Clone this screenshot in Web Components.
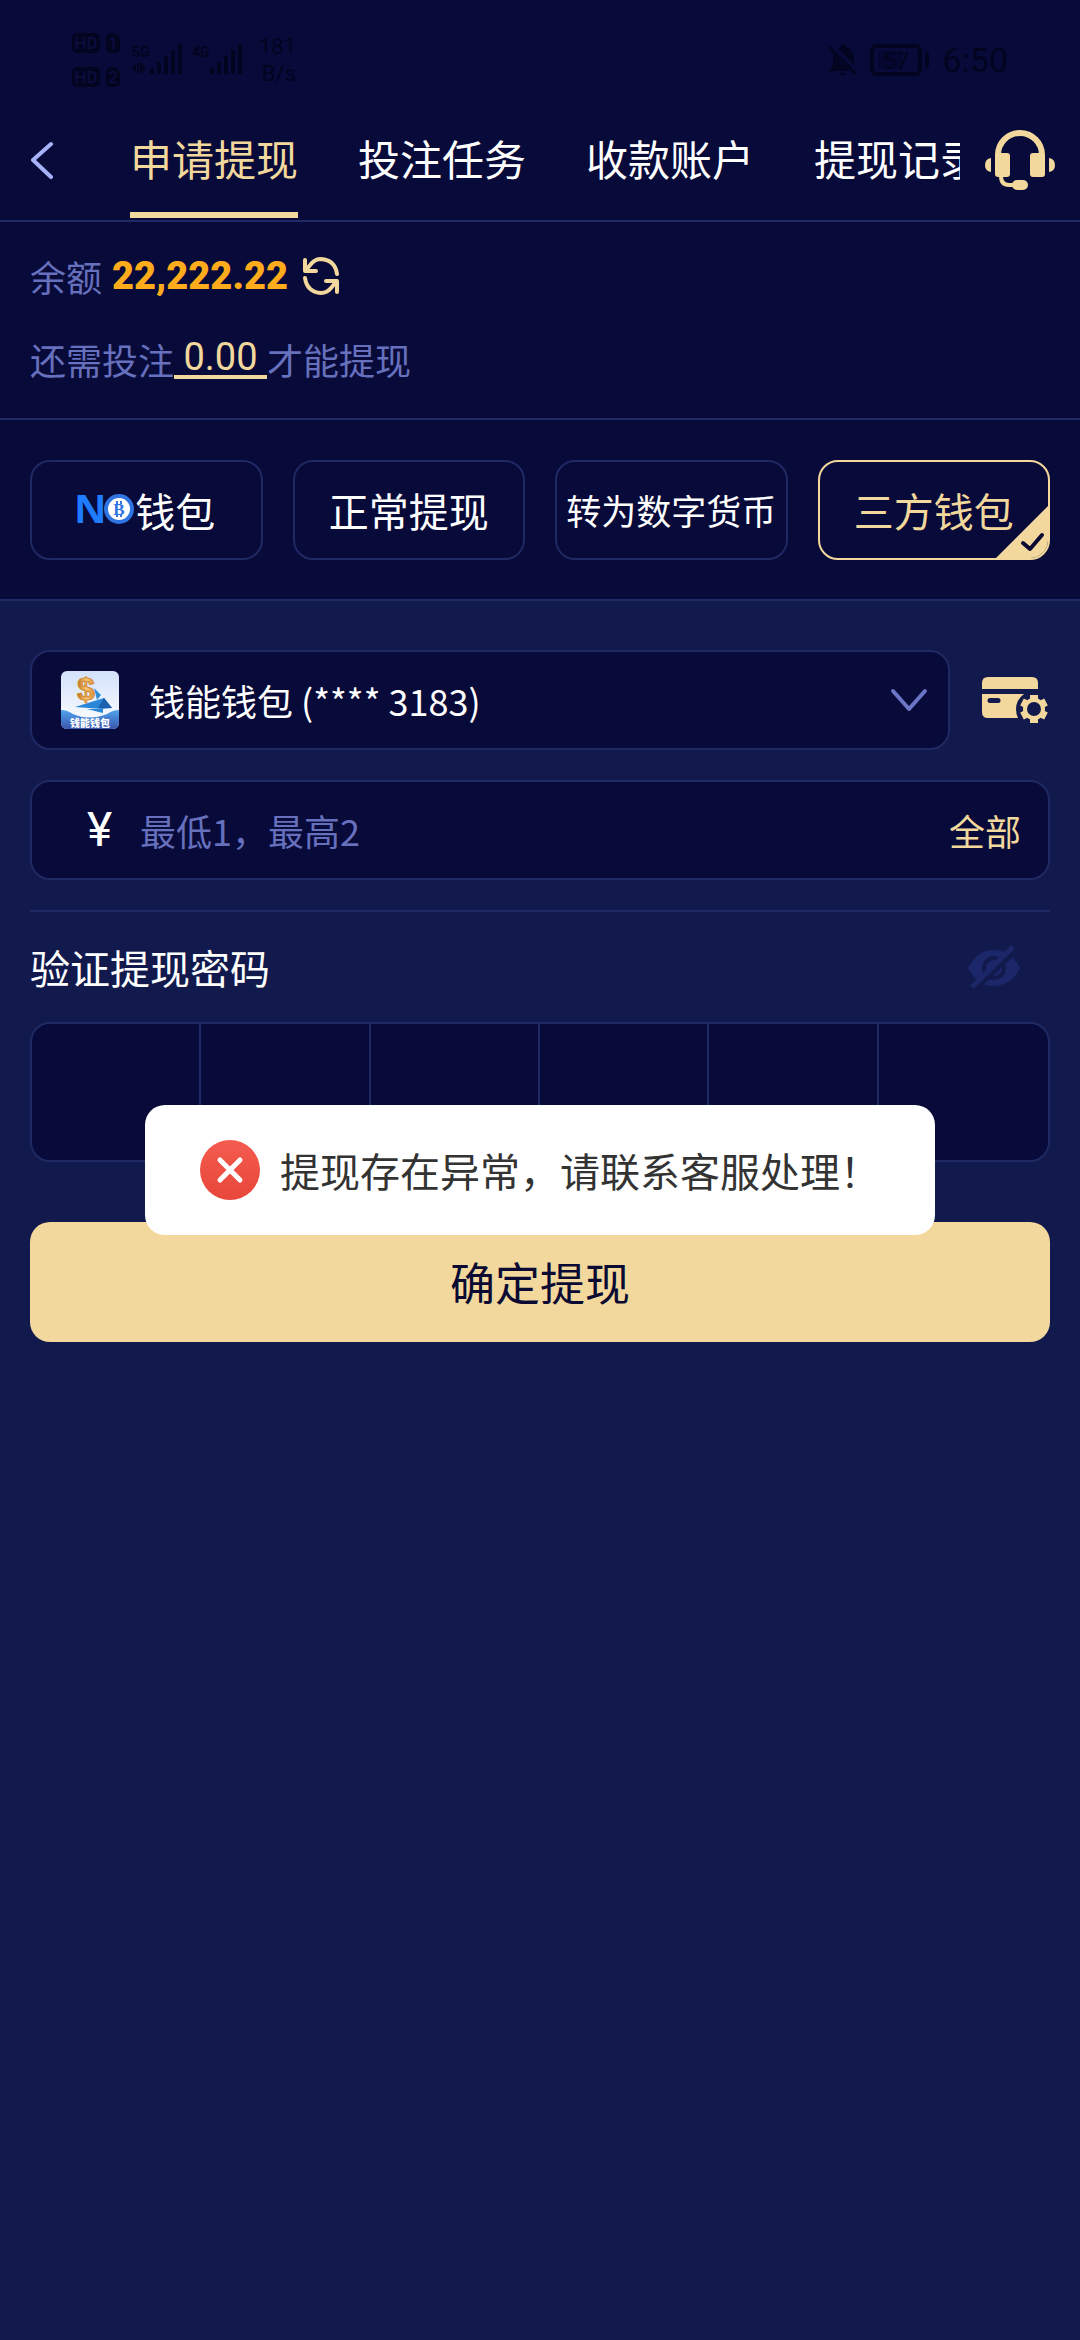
<!DOCTYPE html>
<html lang="zh-CN">
<head>
<meta charset="utf-8">
<meta name="viewport" content="width=device-width, initial-scale=1">
<title>申请提现</title>
<style>
  :root {
    --bg-dark: #080a39;
    --bg: #121a4d;
    --line: #1f2963;
    --gold: #f2d89c;
    --muted: #6670bd;
    --status: #03041f;
    --digits: Roboto, "Noto Sans CJK SC", sans-serif;
  }

  body {
    margin: 0;
    min-height: 100vh;
    background-color: var(--bg);
    color: white;
    font-family: "Noto Sans CJK SC", sans-serif;
    font-size: 36px;
    line-height: 54px;
  }
</style>
</head>
<body>
<withdraw-page></withdraw-page>
<app-toast>提现存在异常，请联系客服处理！</app-toast>

<script>
const baseStyle = `
  * { box-sizing: border-box; }
  :host { display: block; }
  svg { display: block; flex: none; }
  button, input, select {
    font: inherit;
    color: inherit;
    background: none;
    border: 0;
    margin: 0;
    padding: 0;
    outline: none;
  }
  button { cursor: pointer; }
`;

// small base class, every element below only has to give its template
class AppElement extends HTMLElement {
  constructor() {
    super();
    this.shadow = this.attachShadow({ mode: 'open' });
  }

  connectedCallback() {
    this.shadow.innerHTML = `<style>${baseStyle}</style>${this.template()}`;
    this.ready();
  }

  ready() {}
}

customElements.define(
  'status-bar',
  class StatusBar extends AppElement {
    template() {
      const sim = (n) => `
        <div class="sim">
          <span class="hd">HD</span>
          <span class="slot">${n}</span>
        </div>`;
      const bars = `
        <svg width="32" height="30" viewBox="0 0 32 30" fill="currentColor">
          <rect x="0" y="24" width="4" height="6" rx="1"/>
          <rect x="7" y="18" width="4" height="12" rx="1"/>
          <rect x="14" y="12" width="4" height="18" rx="1"/>
          <rect x="21" y="6" width="4" height="24" rx="1"/>
          <rect x="28" y="0" width="4" height="30" rx="1"/>
        </svg>`;
      return `
        <style>
          :host {
            display: flex;
            align-items: center;
            justify-content: space-between;
            height: 100px;
            padding: 20px 72px 0;
            color: var(--status);
            font-family: var(--digits);
          }
          .group { display: flex; align-items: center; }
          .sims { display: grid; gap: 14px; margin-right: 12px; }
          .sim { display: flex; gap: 6px; }
          .hd, .slot {
            background-color: var(--status);
            border-radius: 5px;
            height: 20px;
            width: 28px;
            color: #0b0d40;
            font-size: 17px;
            font-weight: 500;
            line-height: 20px;
            text-align: center;
          }
          .slot { width: 14px; border-top-right-radius: 8px; }
          .net {
            display: grid;
            width: 18px;
            font-size: 14px;
            font-weight: 700;
            line-height: 16px;
            height: 32px;
          }
          .signal { display: flex; margin-right: 10px; }
          .speed {
            font-size: 22px;
            line-height: 27px;
            text-align: right;
            width: 44px;
          }
          .right { gap: 12px; }
          .clock { font-size: 34px; line-height: 40px; }
        </style>
        <div class="group">
          <div class="sims">${sim(1)}${sim(2)}</div>
          <div class="signal">
            <div class="net">5G
              <svg width="14" height="12" viewBox="0 0 14 12" fill="currentColor">
                <path d="M0 6l4-5v10zM5 1h2v10H5zM8 1h2v10H8zM14 6l-4-4v8z"/>
              </svg>
            </div>
            ${bars}
          </div>
          <div class="signal"><div class="net">4G</div>${bars}</div>
          <div class="speed">181<br>B/s</div>
        </div>
        <div class="group right">
          <svg width="30" height="32" viewBox="0 0 30 32" fill="currentColor">
            <path d="M10 4q2-1 3-1 0-3 2.500-3T18 3q8 3 8 11v7z"/>
            <path d="M5 10l17 17H1l4-5z"/>
            <path d="M11 29h8q-4 5-8 0z"/>
            <path d="M1 3l27 27" stroke="currentColor" stroke-width="3"/>
          </svg>
          <svg width="60" height="32" viewBox="0 0 60 32">
            <rect x="2" y="2" width="48" height="28" rx="5" fill="none" stroke="currentColor" stroke-width="4"/>
            <rect x="8" y="7" width="24" height="18" fill="currentColor" opacity=".3"/>
            <rect x="55" y="8" width="4" height="16" rx="2" fill="currentColor"/>
            <text x="26" y="25" text-anchor="middle" font-size="24" fill="currentColor">57</text>
          </svg>
          <span class="clock">6:50</span>
        </div>
      `;
    }
  }
);

customElements.define(
  'page-header',
  class PageHeader extends AppElement {
    template() {
      return `
        <style>
          :host {
            display: flex;
            height: 122px;
            border-bottom: 2px solid var(--line);
          }
          button { display: flex; align-items: center; flex: none; }
          .back { width: 130px; padding-left: 30px; }
          .service { width: 120px; padding-left: 25px; }
          nav {
            display: flex;
            flex: 1;
            gap: 60px;
            min-width: 0;
            overflow: hidden;
          }
        </style>
        <button class="back" aria-label="返回">
          <svg width="24" height="38" viewBox="0 0 24 38" fill="none" stroke="#a7b2fa" stroke-width="4" stroke-linecap="round" stroke-linejoin="round">
            <path d="M21 3L3 19l18 17"/>
          </svg>
        </button>
        <nav><slot></slot></nav>
        <button class="service" aria-label="客服">
          <svg width="70" height="60" viewBox="0 0 70 60" fill="#f2d89c">
            <path d="M13 30v-5a22 22 0 0 1 44 0v5" fill="none" stroke="#f2d89c" stroke-width="6"/>
            <rect x="10" y="23" width="15" height="24" rx="3"/>
            <rect x="45" y="23" width="15" height="24" rx="3"/>
            <path d="M6 28v14q-6-1-6-7t6-7zM64 28v14q6-1 6-7t-6-7z"/>
            <path d="M16 46q0 9 8 9h6" fill="none" stroke="#f2d89c" stroke-width="4"/>
            <rect x="27" y="50" width="16" height="10" rx="5"/>
          </svg>
        </button>
      `;
    }
  }
);

customElements.define(
  'tab-link',
  class TabLink extends AppElement {
    template() {
      return `
        <style>
          :host { display: flex; flex: none; }
          a {
            display: block;
            height: 118px;
            padding-top: 31px;
            border-bottom: 6px solid transparent;
            color: white;
            font-size: 42px;
            text-decoration: none;
            white-space: nowrap;
          }
          :host([active]) a {
            color: var(--gold);
            border-bottom-color: var(--gold);
          }
        </style>
        <a href="#${this.getAttribute('target')}"><slot></slot></a>
      `;
    }
  }
);

customElements.define(
  'balance-info',
  class BalanceInfo extends AppElement {
    template() {
      return `
        <style>
          :host {
            display: grid;
            gap: 29px;
            padding: 27px 30px 32px;
            border-bottom: 2px solid var(--line);
            color: var(--muted);
          }
          div { display: flex; align-items: center; }
          .amount {
            margin: 0 15px 0 10px;
            color: #ffac1c;
            font-family: var(--digits);
            font-size: 38px;
            font-weight: 900;
          }
          .need {
            height: 40px;
            border-bottom: 4px solid var(--gold);
            color: var(--gold);
            font-family: var(--digits);
            font-size: 38px;
            line-height: 36px;
            white-space: pre;
          }
        </style>
        <div>
          <span>余额</span>
          <span class="amount">${this.getAttribute('balance')}</span>
          <button aria-label="刷新余额">
            <svg width="36" height="38" viewBox="0 0 36 38" fill="none" stroke="#f2d89c" stroke-width="4" stroke-linecap="round" stroke-linejoin="round">
              <path d="M2 3v11h11M3 13l5-6q4-5 10-5 14 1 16 15"/>
              <path d="M34 35V24H23M33 25l-5 6q-4 5-10 5Q4 35 2 21"/>
            </svg>
          </button>
        </div>
        <div>还需投注<span class="need"> ${this.getAttribute('need')} </span>才能提现</div>
      `;
    }
  }
);

customElements.define(
  'pay-option',
  class PayOption extends AppElement {
    template() {
      return `
        <style>
          :host { min-width: 0; }
          button {
            position: relative;
            display: flex;
            align-items: center;
            justify-content: center;
            width: 100%;
            height: 100px;
            border: 2px solid var(--line);
            border-radius: 20px;
            overflow: hidden;
            font-size: 40px;
            white-space: nowrap;
          }
          :host([small]) button { font-size: 35px; }
          :host([selected]) button {
            border-color: var(--gold);
            color: var(--gold);
          }
          .check { display: none; }
          :host([selected]) .check {
            display: block;
            position: absolute;
            right: 0;
            bottom: 0;
          }
        </style>
        <button>
          <slot name="logo"></slot>
          <slot></slot>
          <svg class="check" width="52" height="52" viewBox="0 0 52 52">
            <path d="M52 0v52H0z" fill="#f2d89c"/>
            <path d="M27 37l7 6 12-14" fill="none" stroke="#0a0a32" stroke-width="4" stroke-linecap="round" stroke-linejoin="round"/>
          </svg>
        </button>
      `;
    }
  }
);

customElements.define(
  'no-logo',
  class NoLogo extends AppElement {
    template() {
      return `
        <style>
          svg { overflow: visible; }
        </style>
        <svg width="58" height="30" viewBox="0 0 58 30">
          <text x="-3" y="28" font-family="Open Sans" font-weight="700" font-size="40" fill="#1f7bff">N</text>
          <circle cx="42" cy="14" r="15" fill="#2f74e0"/>
          <circle cx="42" cy="14" r="11" fill="white"/>
          <path d="M40 6v3M44 6v3M40 19v3M44 19v3" stroke="#2f74e0" stroke-width="2"/>
          <text x="42" y="20" text-anchor="middle" font-family="Liberation Serif" font-weight="700" font-size="17" fill="#2f74e0">B</text>
        </svg>
      `;
    }
  }
);

customElements.define(
  'wallet-select',
  class WalletSelect extends AppElement {
    template() {
      return `
        <style>
          :host { display: flex; }
          .box {
            display: flex;
            align-items: center;
            flex: 1;
            height: 100px;
            padding: 0 20px 0 29px;
            border: 2px solid var(--line);
            border-radius: 20px;
            background-color: var(--bg-dark);
          }
          select {
            flex: 1;
            min-width: 0;
            height: 96px;
            margin-left: 30px;
            appearance: none;
            cursor: pointer;
          }
          option { background-color: var(--bg-dark); }
          .arrow { pointer-events: none; }
          button { flex: none; width: 100px; padding-left: 32px; }
        </style>
        <div class="box">
          <svg width="58" height="58" viewBox="0 0 58 58">
            <defs>
              <linearGradient id="sky" x2="0" y2="1">
                <stop offset="0" stop-color="#d3e1fb"/>
                <stop offset="1" stop-color="#fff"/>
              </linearGradient>
              <linearGradient id="sea" x2="0" y2="1">
                <stop offset="0" stop-color="#4fa4ee"/>
                <stop offset="1" stop-color="#3b55ac"/>
              </linearGradient>
              <linearGradient id="coin">
                <stop offset="0" stop-color="#b56a1c"/>
                <stop offset=".5" stop-color="#fbc873"/>
                <stop offset="1" stop-color="#d98a2b"/>
              </linearGradient>
              <clipPath id="card"><rect width="58" height="58" rx="6"/></clipPath>
            </defs>
            <g clip-path="url(#card)">
              <rect width="58" height="58" fill="url(#sky)"/>
              <path d="M33 17l7 7-4 5z" fill="#2d8fd8"/>
              <path d="M14 36l29-9 8 10-10 1z" fill="#2a86d6"/>
              <path d="M43 27l8 10H37z" fill="#1b5fae"/>
              <path d="M26 38h16v4z" fill="#2a86d6"/>
              <text x="25" y="29" text-anchor="middle" font-family="Liberation Sans" font-weight="700" font-size="32" fill="url(#coin)" stroke="#d08a35" stroke-width="1">$</text>
              <path d="M0 39q6 0 12 4 16 7 34 0 6-4 12-4v19H0z" fill="url(#sea)"/>
              <text x="29" y="56" text-anchor="middle" font-weight="900" font-size="10" fill="white">钱能钱包</text>
            </g>
          </svg>
          <select aria-label="选择钱包">
            <option>${this.getAttribute('wallet')}</option>
          </select>
          <svg class="arrow" width="38" height="24" viewBox="0 0 38 24" fill="none" stroke="#6b76c6" stroke-width="4" stroke-linecap="round" stroke-linejoin="round">
            <path d="M3 3l16 18L35 3"/>
          </svg>
        </div>
        <button aria-label="管理钱包">
          <svg width="66" height="46" viewBox="0 0 66 46" fill="#f2d89c">
            <path d="M0 12V6q0-6 6-6h44q6 0 6 6v6z"/>
            <path d="M0 17h42q-8 6-8 15 0 5 2 9H6q-6 0-6-6zM8 21a2.500 2.500 0 0 0 0 5h8a2.500 2.500 0 0 0 0-5z" fill-rule="evenodd"/>
            <g stroke="#f2d89c" stroke-width="8">
              <path d="M52 18v5M52 41v5M40 25l4 2M60 37l4 2M64 25l-4 2M44 37l-4 2"/>
            </g>
            <circle cx="52" cy="32" r="9" fill="none" stroke="#f2d89c" stroke-width="4"/>
          </svg>
        </button>
      `;
    }
  }
);

customElements.define(
  'amount-field',
  class AmountField extends AppElement {
    template() {
      return `
        <style>
          :host {
            display: flex;
            align-items: center;
            height: 100px;
            padding: 0 27px 0 55px;
            border: 2px solid var(--line);
            border-radius: 20px;
            background-color: var(--bg-dark);
          }
          label { width: 53px; font-family: var(--digits); font-size: 48px; }
          input { flex: 1; min-width: 0; height: 96px; }
          input::placeholder { color: var(--muted); opacity: 1; }
          button { color: var(--gold); }
        </style>
        <label for="amount">¥</label>
        <input id="amount" inputmode="decimal" placeholder="${this.getAttribute('hint')}">
        <button>全部</button>
      `;
    }
  }
);

customElements.define(
  'pin-field',
  class PinField extends AppElement {
    template() {
      let cells = '';
      for (let i = 0; i < 6; i++) {
        cells += `<input type="password" inputmode="numeric" maxlength="1" id="pin${i}" aria-label="密码第${i + 1}位">`;
      }
      return `
        <style>
          .title {
            display: flex;
            align-items: center;
            justify-content: space-between;
            height: 112px;
            padding-right: 30px;
            border-top: 2px solid var(--line);
            font-size: 40px;
          }
          .cells {
            display: grid;
            grid-template-columns: repeat(6, 1fr);
            height: 140px;
            border: 2px solid var(--line);
            border-radius: 20px;
            background-color: var(--bg-dark);
            overflow: hidden;
          }
          input { width: 100%; min-width: 0; text-align: center; }
          input:not(:last-child) { border-right: 2px solid var(--line); }
        </style>
        <div class="title">
          <label for="pin0"><slot></slot></label>
          <button aria-label="显示密码">
            <svg width="52" height="46" viewBox="0 0 52 46">
              <path d="M0 24Q9 6 26 6t26 18Q43 42 26 42T0 24z" fill="#1b2768"/>
              <circle cx="26" cy="24" r="10" fill="none" stroke="#121a4d" stroke-width="4"/>
              <path d="M7 45L50 5" stroke="#121a4d" stroke-width="5"/>
              <path d="M4 43L45 3" stroke="#1b2768" stroke-width="5"/>
            </svg>
          </button>
        </div>
        <div class="cells">${cells}</div>
      `;
    }

    ready() {
      const inputs = [...this.shadow.querySelectorAll('input')];
      inputs.forEach((input, i) => {
        input.addEventListener('input', () => {
          if (input.value && inputs[i + 1]) inputs[i + 1].focus();
        });
      });
      this.shadow.querySelector('button').addEventListener('click', () => {
        inputs.forEach((input) => {
          input.type = input.type === 'password' ? 'text' : 'password';
        });
      });
    }
  }
);

customElements.define(
  'submit-button',
  class SubmitButton extends AppElement {
    template() {
      return `
        <style>
          button {
            width: 100%;
            height: 120px;
            border-radius: 20px;
            background-color: var(--gold);
            color: #0a0a32;
            font-size: 45px;
          }
        </style>
        <button><slot></slot></button>
      `;
    }
  }
);

customElements.define(
  'app-toast',
  class AppToast extends AppElement {
    template() {
      return `
        <style>
          :host {
            position: fixed;
            inset: 0;
            display: flex;
            align-items: center;
            justify-content: center;
            pointer-events: none;
          }
          #toast {
            display: flex;
            align-items: center;
            gap: 20px;
            padding: 35px 55px;
            border-radius: 20px;
            background-color: white;
            color: #333;
            font-size: 40px;
            line-height: 60px;
          }
        </style>
        <div id="toast" role="alert">
          <svg width="60" height="60" viewBox="0 0 60 60">
            <defs>
              <linearGradient id="red" x2="0" y2="1">
                <stop offset="0" stop-color="#f45c4f"/>
                <stop offset="1" stop-color="#e8463a"/>
              </linearGradient>
            </defs>
            <circle cx="30" cy="30" r="30" fill="url(#red)"/>
            <path d="M20 20l20 20M40 20L20 40" stroke="white" stroke-width="5" stroke-linecap="round"/>
          </svg>
          <span><slot></slot></span>
        </div>
      `;
    }
  }
);

customElements.define(
  'withdraw-page',
  class WithdrawPage extends AppElement {
    template() {
      return `
        <style>
          header { background-color: var(--bg-dark); }
          .options {
            display: grid;
            grid-template-columns: repeat(4, 1fr);
            gap: 30px;
            padding: 40px 30px 39px;
            border-bottom: 2px solid var(--line);
          }
          main {
            display: grid;
            gap: 30px;
            padding: 49px 30px;
          }
          submit-button { margin-top: 30px; }
        </style>
        <header>
          <status-bar></status-bar>
          <page-header>
            <tab-link target="apply" active>申请提现</tab-link>
            <tab-link target="tasks">投注任务</tab-link>
            <tab-link target="accounts">收款账户</tab-link>
            <tab-link target="records">提现记录</tab-link>
          </page-header>
          <balance-info balance="22,222.22" need="0.00"></balance-info>
          <div class="options">
            <pay-option><no-logo slot="logo"></no-logo>钱包</pay-option>
            <pay-option>正常提现</pay-option>
            <pay-option small>转为数字货币</pay-option>
            <pay-option selected>三方钱包</pay-option>
          </div>
        </header>
        <main>
          <wallet-select wallet="钱能钱包 (**** 3183)"></wallet-select>
          <amount-field hint="最低1，最高2"></amount-field>
          <pin-field>验证提现密码</pin-field>
          <submit-button>确定提现</submit-button>
        </main>
      `;
    }
  }
);
</script>
</body>
</html>
